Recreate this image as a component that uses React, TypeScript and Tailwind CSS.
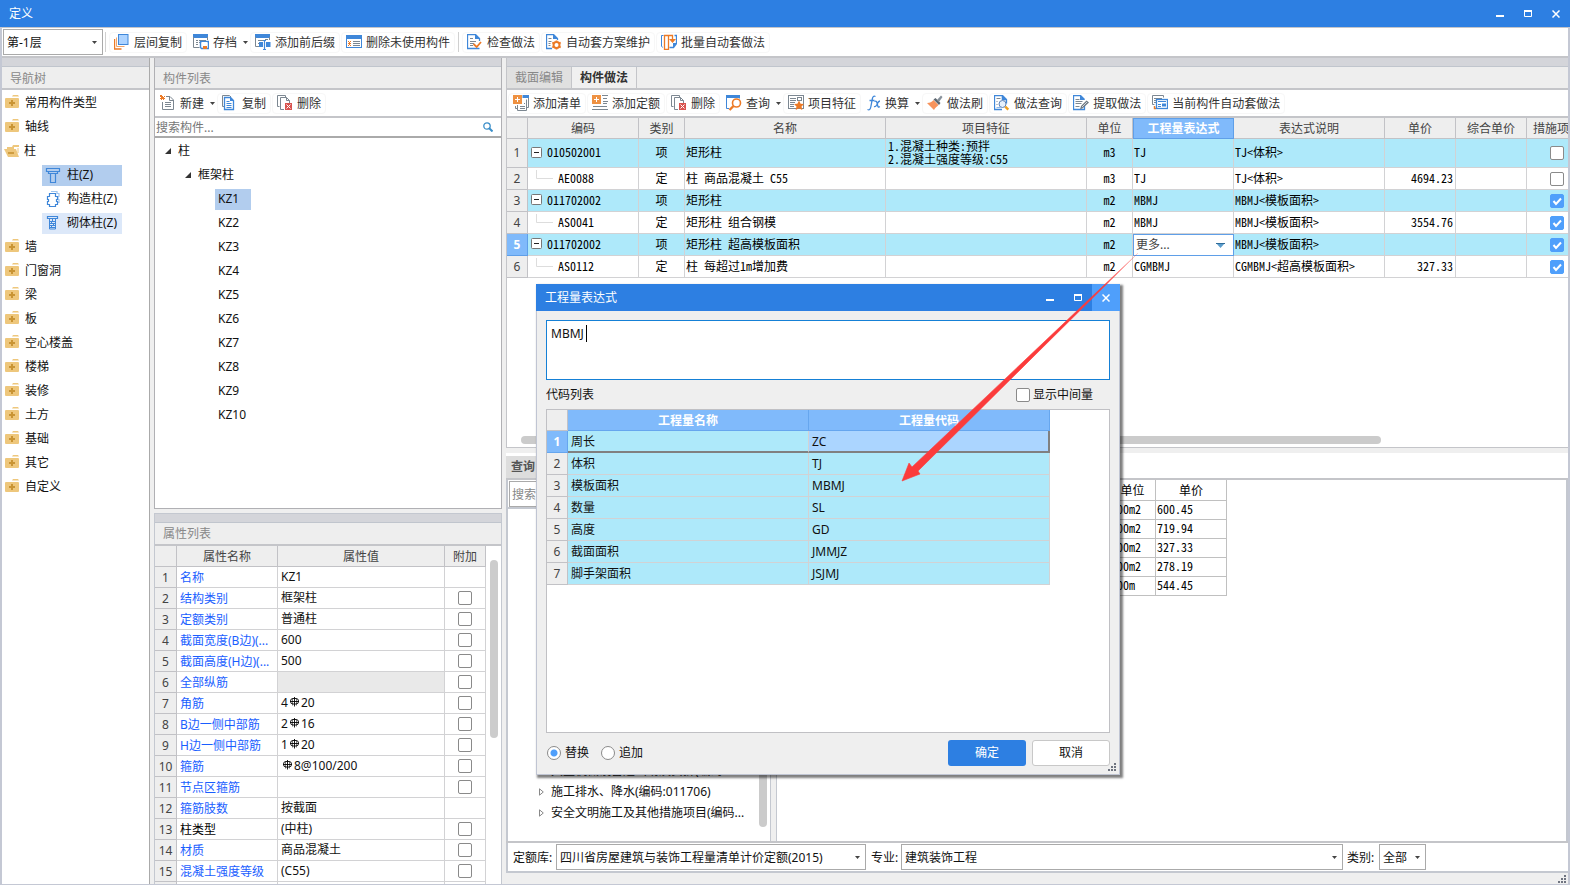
import type { ReactNode } from 'react';
import { clsx } from 'clsx';

const BLUE = '#3f87d9';
const ORANGE = '#ec7a26';
const GRAY = '#7c8791';

function Svg({ children, width = 16 }: { children: ReactNode; width?: number }) {
  return (
    <svg width={width} height={16} viewBox={`0 0 ${width} 16`} fill="none" className="shrink-0" aria-hidden="true">
      {children}
    </svg>
  );
}

const icons = {
  floorCopy: <Svg>
    <path d="M.5 5v10h7" stroke={ORANGE} strokeWidth="1.4" />
    <path d="M2.500 3.500v9h8" stroke="#f0a46c" />
    <rect x="4.500" y=".5" width="9.500" height="10" fill="#add3ff" stroke={BLUE} />
  </Svg>,
  archive: <Svg>
    <rect x="0" y="0" width="15" height="4" fill={BLUE} />
    <path d="M.5 3v10.500h6M14.500 3v3" stroke={GRAY} />
    <path d="M3 6.500h2M6 6.500h7M3 8.500h2M3 10.500h2M6 8.500h1" stroke={GRAY} />
    <path d="M7.500 7.500h8v7h-7l-1-1z" fill="#fff" stroke={BLUE} strokeWidth="1.400" />
    <path d="M9 8h5v3H9z" fill="#fff" />
    <path d="M10 12h4v3h-4z" fill={ORANGE} />
  </Svg>,
  affix: <Svg>
    <rect x="0" y="0" width="15" height="4" fill={BLUE} />
    <path d="M.5 3v9.500h4M14.500 3v3" stroke={GRAY} />
    <path d="M3 6.500h5M3 9.500h3M10 5.500h3" stroke={GRAY} />
    <path d="M8 6.500h3M8 15.500h3M9.500 6v10" stroke={BLUE} strokeWidth="1.200" />
    <path d="M4 8h4v5H4zM11 8h4.500v5H11z" fill={BLUE} />
  </Svg>,
  unused: <Svg>
    <rect x=".5" y="1.500" width="15" height="12" stroke={BLUE} />
    <rect x="0" y="1" width="16" height="4" fill={BLUE} />
    <path d="M2 7h1v1h1V7h1v1h-1v1h1v1h-1v1h1v1h-1v-1h-1v1H2v-1h1v-1H2V9h1V8H2z" fill={ORANGE} />
    <path d="M7 7.500h7M7 9.500h7M7 11.500h7" stroke={GRAY} />
  </Svg>,
  check: <Svg>
    <path d="M12.500 14.500H.5V.5h8l4 4V7" stroke={BLUE} strokeWidth="1.300" />
    <path d="M8 0v5h5z" fill={BLUE} />
    <path d="M3 4.500h3M3 7.500h6M3 9.500h4M3 11.500h3" stroke={GRAY} />
    <path d="M6.500 10l3.200 3 4.300-5" stroke={ORANGE} strokeWidth="1.800" />
  </Svg>,
  gearDoc: <Svg>
    <path d="M6 14.500H.5V.5h7l4 4V6" stroke={BLUE} strokeWidth="1.300" />
    <path d="M7 0v5h5z" fill={BLUE} />
    <path d="M2.500 4.500h3M2.500 7.500h3M2.500 9.500h2M2.500 11.500h2" stroke={GRAY} />
    <circle cx="10.500" cy="11" r="3" stroke={ORANGE} strokeWidth="2" />
    <path d="M10.500 6.500v2M10.500 13.500v2M6.300 8.500l1.800 1M12.900 12.500l1.800 1M6.300 13.500l1.800-1M12.900 9.500l1.800-1" stroke={ORANGE} strokeWidth="1.800" />
  </Svg>,
  batch: <Svg>
    <path d="M2.500 1.500h-2v10.500l1 1.500" stroke={BLUE} />
    <path d="M8.500 13.500h4l3-4v-8h-2" stroke={BLUE} strokeWidth="1.300" />
    <path d="M12 9h4l-4 5z" fill={BLUE} />
    <path d="M3.500 1.500h4v14h-4zM7.500 1.500h4v5" stroke={ORANGE} strokeWidth="1.300" />
    <path d="M8 5h7l-3.500 4z" fill={ORANGE} />
  </Svg>,
  create: <Svg>
    <path d="M6 1.500h4l3.500 3.500v9.500h-11V7" stroke={GRAY} />
    <path d="M9.500 1.500v4h4M5 7.500h6M5 9.500h6M5 11.500h6" stroke={GRAY} />
    <path d="M0 0h2v1h1v1h1V1h1v1H4v1h1v1H4v1H3V4H2v1H1V4H0V3h1V2H0z" fill={ORANGE} />
  </Svg>,
  copy: <Svg>
    <path d="M2 11.500H.5V.5h7l1.500 1.500" stroke={GRAY} />
    <path d="M2.500 2.500h6l3 3v9h-9z" fill="#fff" stroke={BLUE} strokeWidth="1.300" />
    <path d="M8 2v4h4z" fill={BLUE} />
    <path d="M4.500 6.500h3M4.500 8.500h5M4.500 10.500h5M4.500 12.500h5" stroke={BLUE} />
  </Svg>,
  remove: <Svg>
    <path d="M2.500 11.500H.5V.5h8v2" stroke={GRAY} />
    <path d="M7 14.500H3.500v-12h6l3 3V8" stroke={GRAY} />
    <path d="M9.500 2.500v3h3" stroke={GRAY} />
    <rect x="8" y="8" width="7" height="7" fill="#d9534f" />
    <path d="M9.500 9.500l4 4M13.500 9.500l-4 4" stroke="#fff" />
  </Svg>,
  addList: <Svg>
    <path d="M10 2.500h5.500v10h-2M4.500 10v5.500h9v-11" stroke={GRAY} />
    <rect x="9.500" y="0" width="6.500" height="3" fill={BLUE} />
    <path d="M2.500 11v2.500h2M7 11.500h5M7 13.500h5M11 8.500h1" stroke={GRAY} />
    <rect x="0" y="0" width="9" height="9" fill="#ee9142" />
    <path d="M4.500 2v5M2 4.500h5" stroke="#fff" />
  </Svg>,
  addQuota: <Svg>
    <rect x="0" y="0" width="9" height="9" fill="#ee9142" />
    <path d="M4.500 2v5M2 4.500h5" stroke="#fff" />
    <path d="M10 .5h6M11 3.500h4M11 6.500h5M11 8.500h4M1 11.500h14M0 14.500h16" stroke={GRAY} />
  </Svg>,
  query: <Svg>
    <path d="M.5 2v11.500H3M13.500 2v1.500" stroke={BLUE} />
    <rect x="0" y="0" width="14" height="3" fill={BLUE} />
    <circle cx="10.500" cy="8" r="4" fill="#fff" stroke={ORANGE} strokeWidth="1.600" />
    <path d="M7.500 11l-4 4" stroke={ORANGE} strokeWidth="2.400" />
  </Svg>,
  feature: <Svg>
    <rect x=".5" y=".5" width="15" height="13" stroke={GRAY} />
    <path d="M2 3.500h6M2 5.500h6M2 7.500h5M2 9.500h4M2 11.500h4" stroke={GRAY} />
    <rect x="9.500" y="2.500" width="4" height="3" stroke={GRAY} />
    <path d="M11 5.500l1.600 3.200 3.400.3-2.500 2.400.8 3.600-3.300-1.800L7.700 15l.8-3.600L6 9l3.400-.3z" fill={ORANGE} />
  </Svg>,
  fx: <Svg width={14}>
    <path d="M8.500 1.500c-2-1-2.800.5-3.200 2.500L3.800 12c-.5 2.500-1.500 3.300-3.300 2.500M2.500 5.500h5" stroke={BLUE} strokeWidth="1.300" />
    <path d="M7.500 6.500c1.800-1 2.300 0 2.800 2.500s1 4 2.500 2.500M13 6c-2 0-2.500 2.500-3.300 4s-1.500 2-2.700 1.500" stroke={BLUE} strokeWidth="1.300" />
  </Svg>,
  brush: <Svg>
    <path d="M0 8c3 0 5-1 6.500-3l5 5c-1.500 2-3.500 2.500-4.500 5z" fill="#f7935c" />
    <path d="M6.500 4.500l5.500 5.500 1.500-2-5-5z" fill="#5d666f" />
    <path d="M10 5l4-4.500 1.500 1.500L12 7z" fill="#87919b" />
  </Svg>,
  docSearch: <Svg>
    <path d="M8 14.500H.5V.5h8l4 4v4" stroke={BLUE} strokeWidth="1.300" />
    <path d="M8 0v5h5zM2.500 12.500h4" fill={BLUE} stroke={BLUE} strokeWidth=".6" />
    <path d="M2.500 3.500h4M2.500 6.500h1M2.500 9.500h1" stroke={GRAY} />
    <circle cx="8.500" cy="9" r="3.500" fill="#e6f1fd" stroke="#5c82b8" />
    <path d="M11.300 11.700l3 3" stroke="#f0a020" strokeWidth="2.400" />
  </Svg>,
  extract: <Svg>
    <path d="M11.500 10v4.500H.5V.5h7l4 4" stroke={BLUE} strokeWidth="1.300" />
    <path d="M7 0v5h5z" fill={BLUE} />
    <path d="M2.500 4.500h4M2.500 6.500h7M2.500 8.500h6M2.500 11.500h4" stroke={GRAY} />
    <path d="M7 14.500l1-3.500 5.500-5.500 2.500 2-6 5.500z" fill="#6f7a84" />
    <path d="M9 12l5-5" stroke="#fff" strokeWidth=".7" />
  </Svg>,
  autoApply: <Svg>
    <path d="M2.500 9.500H.5v-9h11v2" stroke={GRAY} />
    <path d="M2 3.500h8M2 5.500h2M2 7.500h2" stroke={GRAY} />
    <path d="M2.500 11v2.500H4" stroke={ORANGE} strokeWidth="1.400" />
    <rect x="4.500" y="4.500" width="11" height="9" fill="#fff" stroke={BLUE} strokeWidth="1.300" />
    <path d="M6 6.500h8M6 9.500h3M6 11.500h3" stroke={BLUE} />
    <path d="M10 8.500h4v3h-4z" fill={BLUE} />
  </Svg>,
  columnT: <Svg>
    <path d="M1.500 1.500h13v3h-13zM3.500 4.500v2h9v-2M5.500 6.500v9h5v-9" stroke={BLUE} strokeWidth="1.200" />
  </Svg>,
  columnTie: <Svg>
    <path d="M6 .5h6v2h2v3h-1v3h1v3h-2" stroke="#9fc4ee" strokeWidth="1.200" />
    <path d="M4.500 2.500h6v3h2v3h-1v2h1v3h-2v2h-6v-2h-2v-3h1v-2h-1v-3h2z" fill="#fff" stroke={BLUE} strokeWidth="1.200" />
  </Svg>,
  columnBrick: <Svg>
    <path d="M2.500 1.500h10v2h-10z" stroke={BLUE} strokeWidth="1.200" />
    <path d="M4.500 4v10h6V4M4 6.500h7M4 8.500h7M4 10.500h7M4 12.500h7M7.500 4v2M6.500 6v2M8.500 8v2M6.500 10v2" stroke={BLUE} />
  </Svg>,
};

type IconName = keyof typeof icons;

function Folder({ open }: { open?: boolean }) {
  if (open) {
    return (
      <svg width="16" height="14" viewBox="0 0 16 14" className="-ml-px mb-px mr-1 shrink-0">
        <path d="M3 3h5l1-2h6v2h-5v2H3z" fill="#eec77c" />
        <path d="M14 4v5" stroke="#eec77c" />
        <path d="M0 5h12l3 8H4z" fill="#eec77c" />
        <path d="M4 9h6" stroke="#c48f2e" strokeWidth="1.500" />
      </svg>
    );
  }
  return (
    <svg width="14" height="14" viewBox="0 0 14 14" className="mb-1 mr-[6px] shrink-0">
      <path d="M7 2.500L8 1h5l1 1.500z" fill="#eec77c" />
      <rect y="4" width="14" height="10" rx="1" fill="#eec77c" />
      <path d="M7 6v6M4 9h6" stroke="#c99434" strokeWidth="2" />
    </svg>
  );
}

function Caret({ className }: { className?: string }) {
  return (
    <svg width="5" height="3" viewBox="0 0 5 3" className={clsx('shrink-0 pointer-events-none', className)}>
      <path d="M0 0h5L2.500 3z" fill="#444" />
    </svg>
  );
}

function ToolButton({ icon, label, menu }: { icon: IconName; label: string; menu?: boolean }) {
  return (
    <button type="button" className={clsx('flex h-[21px] shrink-0 items-center gap-1 whitespace-nowrap rounded-sm border pl-1 text-[#333]', menu ? 'border-transparent' : 'border-[#f7f7f7] pr-1')}>
      {icons[icon]}
      <span className="pt-[2px]">{label}</span>
      {menu && <Caret className="ml-[2px]" />}
    </button>
  );
}

function Select({ id, value, className }: { id: string; value: string; className?: string }) {
  return (
    <div className={clsx('relative', className)}>
      <select id={id} aria-label={value} className="h-[26px] w-full appearance-none border border-[#aaa] bg-white pl-[3px] pr-4 pt-[2px] outline-none">
        <option>{value}</option>
      </select>
      <Caret className="absolute right-[6px] top-[12px]" />
    </div>
  );
}

function Check({ checked, label, id }: { checked?: boolean; label: string; id?: string }) {
  return (
    <span className="relative inline-flex align-middle">
      <input id={id} type="checkbox" defaultChecked={checked} aria-label={label} className="peer size-[14px] appearance-none rounded-[2px] border border-[#8a8a8a] bg-white checked:border-[#4f9ffb] checked:bg-[#4f9ffb]" />
      <svg viewBox="0 0 14 14" className="pointer-events-none absolute inset-0 hidden size-[14px] peer-checked:block">
        <path d="M3.500 7l2.500 3 5-5.500" stroke="#fff" strokeWidth="2" fill="none" />
      </svg>
    </span>
  );
}

function WindowButtons({ active }: { active?: boolean }) {
  return (
    <div className="flex h-full">
      <button type="button" aria-label="最小化" className="flex w-7 items-center justify-center">
        <svg width="8" height="8" viewBox="0 0 8 8"><path d="M0 6h8" stroke="#fff" strokeWidth="2" /></svg>
      </button>
      <button type="button" aria-label="最大化" className="flex w-7 items-center justify-center">
        <svg width="8" height="8" viewBox="0 0 8 8"><path d="M.5 1v5.500h7V1M0 1.500h8" stroke="#fff" fill="none" /><path d="M0 1h8" stroke="#fff" strokeWidth="2" /></svg>
      </button>
      <button type="button" aria-label="关闭" className={clsx('flex w-7 items-center justify-center', active && 'bg-[#4f9ffb]')}>
        <svg width="8" height="8" viewBox="0 0 8 8"><path d="M.5 .5l7 7M7.500 .5l-7 7" stroke="#fff" strokeWidth="1.500" /></svg>
      </button>
    </div>
  );
}

function Grip({ className }: { className?: string }) {
  return (
    <svg width="8" height="8" viewBox="0 0 8 8" className={className}>
      <path d="M6 0h2v2H6zM3 3h2v2H3zM6 3h2v2H6zM0 6h2v2H0zM3 6h2v2H3zM6 6h2v2H6z" fill="#6f7480" />
    </svg>
  );
}

function PanelHead({ title, children }: { title?: string; children?: ReactNode }) {
  return (
    <>
      <div className="h-[9px] shrink-0 border-b border-[#c0c5cd] bg-[#d4d5da]" />
      <div className="flex h-[23px] shrink-0 items-center border-b-2 border-[#c4c5c9] bg-[#eeeeee] text-[#888]">
        {title && <h2 className="pl-2 pt-[2px]">{title}</h2>}
        {children}
      </div>
    </>
  );
}

const navBefore = ['常用构件类型', '轴线'];
const navAfter = ['墙', '门窗洞', '梁', '板', '空心楼盖', '楼梯', '装修', '土方', '基础', '其它', '自定义'];
const columnKinds: { icon: IconName; label: string; bg?: string }[] = [
  { icon: 'columnT', label: '柱(Z)', bg: 'bg-[#b2cdee]' },
  { icon: 'columnTie', label: '构造柱(Z)' },
  { icon: 'columnBrick', label: '砌体柱(Z)', bg: 'bg-[#dce8f9]' },
];
const members = ['KZ1', 'KZ2', 'KZ3', 'KZ4', 'KZ5', 'KZ6', 'KZ7', 'KZ8', 'KZ9', 'KZ10'];

function NavPanel() {
  return (
    <section className="flex w-[148px] shrink-0 flex-col border-r border-[#aaa] bg-white">
      <PanelHead title="导航树" />
      <ul className="pt-px">
        {navBefore.map((n) => <li key={n} className="flex h-6 items-center pl-[3px]"><Folder />{n}</li>)}
        <li className="flex h-6 items-center pl-[3px]"><Folder open />柱</li>
        {columnKinds.map((k) => (
          <li key={k.label} className="flex h-6 items-center pl-10">
            <span className={clsx('flex h-[21px] w-20 items-center gap-[6px] pl-[3px]', k.bg)}>{icons[k.icon]}{k.label}</span>
          </li>
        ))}
        {navAfter.map((n) => <li key={n} className="flex h-6 items-center pl-[3px]"><Folder />{n}</li>)}
      </ul>
    </section>
  );
}

const openMark = <svg width="6" height="6" viewBox="0 0 6 6" className="shrink-0"><path d="M6 0v6H0z" fill="#333" /></svg>;

function MemberPanel() {
  return (
    <section className="flex min-h-0 flex-[451] flex-col border border-t-0 border-[#b0b0b4] bg-white">
      <PanelHead title="构件列表" />
      <div className="flex h-7 shrink-0 items-center gap-px border-b-2 border-[#c4c5c9]">
        <ToolButton icon="create" label="新建" menu />
        <ToolButton icon="copy" label="复制" />
        <ToolButton icon="remove" label="删除" />
      </div>
      <div className="flex h-5 shrink-0 items-center border-b-2 border-[#aaa] pr-2">
        <input aria-label="搜索构件" placeholder="搜索构件..." className="min-w-0 flex-1 pl-px pt-[2px] outline-none placeholder:text-[#777]" />
        <svg width="10" height="10" viewBox="0 0 10 10"><circle cx="4" cy="4" r="3.200" fill="none" stroke="#3c8fc9" strokeWidth="1.300" /><path d="M6.500 6.500L9.500 9.500" stroke="#3c8fc9" strokeWidth="2" /></svg>
      </div>
      <ul className="pt-px">
        <li className="flex h-6 items-center gap-[7px] pl-[10px]">{openMark}柱</li>
        <li className="flex h-6 items-center gap-[7px] pl-[30px]">{openMark}框架柱</li>
        {members.map((m, i) => (
          <li key={m} className="flex h-6 items-center pl-[60px]">
            <span className={clsx('flex h-[21px] items-center pl-[3px]', i === 0 && 'w-9 bg-[#b2cdee]')}>{m}</span>
          </li>
        ))}
      </ul>
    </section>
  );
}

const rebar = (
  <svg width="11" height="10" viewBox="0 0 11 10" className="mx-px mb-1 inline-block" fill="none" stroke="#000" strokeWidth=".9">
    <path d="M5.500 0v9.500M1 4.500h9" />
    <rect x="1.500" y="1.500" width="8" height="5.500" rx="2.500" />
    <path d="M3.500 1.500v7M7.500 1.500v7" strokeWidth=".5" />
  </svg>
);

// add: whether the 附加 column has a tick box
const props: { name: string; value?: ReactNode; add?: boolean; plain?: boolean; off?: boolean }[] = [
  { name: '名称', value: 'KZ1' },
  { name: '结构类别', value: '框架柱', add: true },
  { name: '定额类别', value: '普通柱', add: true },
  { name: '截面宽度(B边)(...', value: '600', add: true },
  { name: '截面高度(H边)(...', value: '500', add: true },
  { name: '全部纵筋', add: true, off: true },
  { name: '角筋', value: <>4{rebar}20</>, add: true },
  { name: 'B边一侧中部筋', value: <>2{rebar}16</>, add: true },
  { name: 'H边一侧中部筋', value: <>1{rebar}20</>, add: true },
  { name: '箍筋', value: <>{rebar}8@100/200</>, add: true },
  { name: '节点区箍筋', add: true },
  { name: '箍筋肢数', value: '按截面' },
  { name: '柱类型', value: '(中柱)', add: true, plain: true },
  { name: '材质', value: '商品混凝土', add: true },
  { name: '混凝土强度等级', value: '(C55)', add: true },
  { name: '' },
];

const headCell = 'border-b border-r border-[#c2c2c6] bg-[#eeeeee] p-0 text-center font-normal text-[#444]';
const bodyCell = 'overflow-hidden whitespace-nowrap border-b border-r border-[#d2d2d4] p-0';

function PropertyPanel() {
  return (
    <section className="flex min-h-0 flex-[371] flex-col overflow-hidden border border-b-0 border-[#c4c8d0] bg-white">
      <PanelHead title="属性列表" />
      <div className="relative min-h-0 flex-1 overflow-hidden">
        <table className="w-[331px] table-fixed border-separate border-spacing-0">
          <colgroup><col className="w-[22px]" /><col className="w-[101px]" /><col className="w-[167px]" /><col className="w-[41px]" /></colgroup>
          <thead>
            <tr className="h-[21px]">
              {['', '属性名称', '属性值', '附加'].map((h) => <th key={h} className={clsx(headCell, 'pt-[2px]')}>{h}</th>)}
            </tr>
          </thead>
          <tbody>
            {props.map((p, i) => (
              <tr key={i} className="h-[21px]">
                <td className={clsx(headCell, 'pt-[2px]')}>{p.name && i + 1}</td>
                <td className={clsx(bodyCell, 'pl-[3px] pt-[2px]', p.plain ? 'text-black' : 'text-[#1a5eff]')}>{p.name}</td>
                <td className={clsx(bodyCell, 'pl-[3px]', p.off && 'bg-[#e9e9e9]')}>{p.value}</td>
                <td className={clsx(bodyCell, 'text-center leading-[14px]')}>{p.add && <Check label={`附加 ${p.name}`} />}</td>
              </tr>
            ))}
          </tbody>
        </table>
        <div className="absolute right-[3px] top-[14px] h-[178px] w-2 rounded-full bg-[#cccccc]" />
      </div>
    </section>
  );
}

const song = "font-['Noto_Sans_CJK_SC',sans-serif] [font-feature-settings:'hwid'] text-black";
const songCell = clsx(bodyCell, song, 'pb-[2px]');

const works = [
  { code: '010502001', kind: '项', name: '矩形柱', feature: ['1.混凝土种类:预拌', '2.混凝土强度等级:C55'], unit: 'm3', expr: 'TJ', note: 'TJ<体积>', price: '', on: false },
  { code: 'AE0088', kind: '定', name: '柱 商品混凝土 C55', unit: 'm3', expr: 'TJ', note: 'TJ<体积>', price: '4694.23', on: false },
  { code: '011702002', kind: '项', name: '矩形柱', unit: 'm2', expr: 'MBMJ', note: 'MBMJ<模板面积>', price: '', on: true },
  { code: 'AS0041', kind: '定', name: '矩形柱 组合钢模', unit: 'm2', expr: 'MBMJ', note: 'MBMJ<模板面积>', price: '3554.76', on: true },
  { code: '011702002', kind: '项', name: '矩形柱 超高模板面积', unit: 'm2', expr: '', note: 'MBMJ<模板面积>', price: '', on: true },
  { code: 'AS0112', kind: '定', name: '柱 每超过1m增加费', unit: 'm2', expr: 'CGMBMJ', note: 'CGMBMJ<超高模板面积>', price: '327.33', on: true },
];

function WorkTable() {
  return (
    <table className="w-[1081px] table-fixed border-separate border-spacing-0">
      <colgroup>
        <col className="w-[21px]" /><col className="w-[111px]" /><col className="w-[46px]" /><col className="w-[201px]" /><col className="w-[201px]" /><col className="w-[46px]" />
        <col className="w-[101px]" /><col className="w-[151px]" /><col className="w-[71px]" /><col className="w-[71px]" /><col className="w-[61px]" />
      </colgroup>
      <thead>
        <tr className="h-[21px]">
          {['', '编码', '类别', '名称', '项目特征', '单位', '工程量表达式', '表达式说明', '单价', '综合单价', '措施项目'].map((h) => (
            <th key={h} className={h === '工程量表达式' ? 'border border-[#5f9fe8] bg-[#80bafb] p-0 font-bold text-white' : clsx(headCell, 'pt-[2px]')}>{h}</th>
          ))}
        </tr>
      </thead>
      <tbody>
        {works.map((w, i) => {
          const parent = w.kind === '项';
          return (
            <tr key={i} className={clsx(i === 0 ? 'h-[29px]' : 'h-[22px]', parent && 'bg-[#aee9fa]')}>
              <td className={i === 4 ? 'border-b border-r border-[#5f9fe8] bg-[#80bafb] p-0 text-center font-bold text-white' : headCell}>{i + 1}</td>
              <td className={songCell}>
                {parent ? (
                  <div className="flex items-center gap-[5px] pl-[3px]">
                    <svg width="11" height="11" viewBox="0 0 11 11"><rect x=".5" y=".5" width="10" height="10" rx="1" fill="#fff" stroke="#777" /><path d="M3 5.500h5" stroke="#222" /></svg>
                    {w.code}
                  </div>
                ) : (
                  <div className="flex h-4 items-center gap-[5px] pl-2">
                    <svg width="17" height="16" viewBox="0 0 17 16"><path d="M.5 0v8.500H17" stroke="#ddd" fill="none" /></svg>
                    {w.code}
                  </div>
                )}
              </td>
              <td className={clsx(songCell, 'text-center')}>{w.kind}</td>
              <td className={clsx(songCell, 'pl-px')}>{w.name}</td>
              <td className={clsx(songCell, 'pl-[2px] leading-[13px]')}>{w.feature?.map((f) => <div key={f}>{f}</div>)}</td>
              <td className={clsx(songCell, 'text-center')}>{w.unit}</td>
              {i === 4 ? (
                <td className="border border-[#5f9fe8] bg-white p-0">
                  <button type="button" className="flex w-full items-center justify-between pl-[2px] pr-2 text-[#444]">
                    更多...
                    <svg width="9" height="5" viewBox="0 0 9 5"><path d="M0 0h9L4.500 5z" fill="#5a9ccc" /><path d="M0 .5h9" stroke="#2f6c99" /></svg>
                  </button>
                </td>
              ) : (
                <td className={clsx(songCell, 'pl-px')}>{w.expr}</td>
              )}
              <td className={clsx(songCell, 'pl-px')}>{w.note}</td>
              <td className={clsx(songCell, 'pr-[2px] text-right')}>{w.price}</td>
              <td className={bodyCell} />
              <td className={clsx(bodyCell, 'text-center leading-[14px]')}><Check checked={w.on} label={`措施项目 ${w.code}`} /></td>
            </tr>
          );
        })}
      </tbody>
    </table>
  );
}

function WorkPanel() {
  return (
    <section className="flex min-h-0 flex-[390] flex-col border-b border-l border-[#c4c5c9] bg-white">
      <PanelHead>
        <div role="tablist" className="flex h-full">
          <button type="button" role="tab" className="w-[65px] border-r border-[#c4c5c9] bg-[#e0e0e0]">截面编辑</button>
          <button type="button" role="tab" className="w-[65px] border-r border-[#c4c5c9] bg-[#f0f0f0] font-bold text-[#333]">构件做法</button>
        </div>
      </PanelHead>
      <div className="flex h-7 shrink-0 items-center gap-px border-b-2 border-[#c4c5c9] pl-px">
        <ToolButton icon="addList" label="添加清单" />
        <ToolButton icon="addQuota" label="添加定额" />
        <ToolButton icon="remove" label="删除" />
        <ToolButton icon="query" label="查询" menu />
        <ToolButton icon="feature" label="项目特征" />
        <ToolButton icon="fx" label="换算" menu />
        <ToolButton icon="brush" label="做法刷" />
        <ToolButton icon="docSearch" label="做法查询" />
        <ToolButton icon="extract" label="提取做法" />
        <ToolButton icon="autoApply" label="当前构件自动套做法" />
      </div>
      <div className="min-h-0 flex-1 overflow-hidden"><WorkTable /></div>
      <div className="mb-[3px] ml-[14px] mr-[187px] h-2 shrink-0 rounded-full bg-[#cbcbcb]" />
    </section>
  );
}

const chapters = ['大型机械设备进出场及安拆(编码...', '施工排水、降水(编码:011706)', '安全文明施工及其他措施项目(编码...'];
const quotas = [['100m2', '600.45'], ['100m2', '719.94'], ['100m2', '327.33'], ['100m2', '278.19'], ['100m', '544.45']];
const quotaCell = 'border-b border-r border-[#c0c0c0] p-0';

function QueryPanel() {
  return (
    <section className="flex min-h-0 flex-[420] flex-col border-b-2 border-[#c4c8d0] bg-white">
      <div className="flex h-[27px] shrink-0 items-end border-b-2 border-[#c4c5c9]">
        <button type="button" className="h-[22px] w-16 bg-[#dddddd] pl-[5px] pt-px text-left font-bold text-[#555]">查询</button>
      </div>
      <div className="flex min-h-0 flex-1 border-b-2 border-[#c4c5c9]">
        <div className="relative flex w-[265px] shrink-0 flex-col border-l-2 border-r border-[#c4c8d0]">
          <div className="h-[29px] border-b-2 border-[#c4c8d0] px-px pt-px">
            <input aria-label="搜索" placeholder="搜索" className="h-[26px] w-full border border-[#aaa] pl-[2px] pt-[2px] outline-none placeholder:text-[#888]" />
          </div>
          <ul className="flex flex-1 flex-col justify-end pb-[18px]">
            {chapters.map((c) => (
              <li key={c} className="flex h-[21px] items-center gap-[7px] whitespace-nowrap pl-[31px]">
                <svg width="5" height="8" viewBox="0 0 5 8" className="shrink-0"><path d="M.5 .8v6.400L4.300 4z" fill="#fff" stroke="#888" /></svg>
                {c}
              </li>
            ))}
          </ul>
          <div className="absolute bottom-[14px] right-[3px] h-[200px] w-2 rounded-full bg-[#cbcbcb]" />
        </div>
        <div className="w-[5px] shrink-0 bg-[#efefef]" />
        <div className="min-w-0 flex-1 overflow-hidden border-l border-r-2 border-[#c4c8d0]">
          <table className="w-[450px] table-fixed border-separate border-spacing-0 text-black">
            <colgroup><col className="w-[333px]" /><col className="w-[46px]" /><col className="w-[71px]" /></colgroup>
            <thead>
              <tr className="h-[21px]">
                <th className={quotaCell} />
                <th className={clsx(quotaCell, song, 'font-normal')}>单位</th>
                <th className={clsx(quotaCell, song, 'font-normal')}>单价</th>
              </tr>
            </thead>
            <tbody>
              {quotas.map((q, i) => (
                <tr key={i} className="h-[19px]">
                  <td className={quotaCell} />
                  {q.map((v) => <td key={v} className={clsx(quotaCell, song, 'pb-[2px] pl-px')}>{v}</td>)}
                </tr>
              ))}
            </tbody>
          </table>
        </div>
      </div>
      <div className="flex h-7 shrink-0 items-center border-l-2 border-[#c4c8d0] pl-[5px]">
        <label htmlFor="lib" className="w-[43px] shrink-0 pt-[2px]">定额库:</label>
        <Select id="lib" value="四川省房屋建筑与装饰工程量清单计价定额(2015)" className="w-[310px] shrink-0" />
        <label htmlFor="major" className="ml-[5px] w-[30px] shrink-0 pt-[2px]">专业:</label>
        <Select id="major" value="建筑装饰工程" className="min-w-0 flex-1" />
        <label htmlFor="kind" className="ml-1 w-[32px] shrink-0 pt-[2px]">类别:</label>
        <Select id="kind" value="全部" className="mr-[142px] w-[47px] shrink-0" />
      </div>
    </section>
  );
}

const codes = [['周长', 'ZC'], ['体积', 'TJ'], ['模板面积', 'MBMJ'], ['数量', 'SL'], ['高度', 'GD'], ['截面面积', 'JMMJZ'], ['脚手架面积', 'JSJMJ']];
const blueHead = 'border-b border-r border-[#66a6ee] bg-[#80bafb] p-0 text-center font-bold text-white';
const radio = "size-[14px] appearance-none rounded-full border border-[#8a8a8a] bg-white checked:bg-[radial-gradient(circle,#4f9ffb_3px,white_4px)]";

function ExpressionDialog() {
  return (
    <div role="dialog" aria-label="工程量表达式" className="absolute left-[536px] top-[284px] flex h-[491px] w-[584px] flex-col bg-[#efefef] shadow-[2px_2px_2px_1px_rgba(0,0,0,0.5)]">
      <div className="flex h-[27px] shrink-0 items-center justify-between bg-[#2d7fe2] pl-[9px] text-white">
        工程量表达式
        <WindowButtons active />
      </div>
      <div className="flex min-h-0 flex-1 flex-col border border-t-0 border-[#c0c5d3] px-[9px] pb-2 pt-[9px]">
        <div className="relative shrink-0">
          <textarea aria-label="表达式" defaultValue="MBMJ" className="block h-[60px] w-full resize-none border border-[#1580d6] bg-white px-1 py-[5px] leading-4 outline-none" />
          <span className="absolute left-[40px] top-[5px] h-[17px] w-px bg-black" />
        </div>
        <div className="flex h-[29px] shrink-0 items-center justify-between pr-[17px]">
          <span>代码列表</span>
          <label className="flex items-center gap-[3px]"><Check label="显示中间量" />显示中间量</label>
        </div>
        <div className="min-h-0 flex-1 border border-[#c0c0c4] bg-white">
          <table className="w-[503px] table-fixed border-separate border-spacing-0">
            <colgroup><col className="w-[21px]" /><col className="w-[241px]" /><col className="w-[241px]" /></colgroup>
            <thead>
              <tr className="h-[21px]"><th className={headCell} /><th className={clsx(blueHead, 'pt-[2px]')}>工程量名称</th><th className={clsx(blueHead, 'pt-[2px]')}>工程量代码</th></tr>
            </thead>
            <tbody>
              {codes.map(([name, code], i) => (
                <tr key={code} className="h-[22px] bg-[#aee9fa]">
                  <td className={i === 0 ? blueHead : headCell}>{i + 1}</td>
                  <td className={clsx('border-r border-[#d2d2d4] p-0 pl-[3px]', i === 0 ? 'border-b-2 border-b-[#808080] pt-[2px]' : 'border-b')}>{name}</td>
                  <td className={clsx('p-0 pl-[3px]', i === 0 ? 'border-b-2 border-r-2 border-[#808080] bg-[#abd5ff] pt-[2px]' : 'border-b border-r border-[#d2d2d4]')}>{code}</td>
                </tr>
              ))}
            </tbody>
          </table>
        </div>
        <div className="mt-[7px] flex h-[26px] shrink-0 items-center gap-[6px] pl-px">
          <label className="flex items-center gap-1"><input type="radio" name="mode" defaultChecked className={radio} />替换</label>
          <label className="ml-[6px] flex items-center gap-1"><input type="radio" name="mode" className={radio} />追加</label>
          <button type="button" className="ml-auto h-[26px] w-[78px] rounded-[3px] bg-[#2d7fe2] text-white">确定</button>
          <button type="button" className="h-[26px] w-[78px] rounded-[3px] border border-[#c8c8c8] bg-white">取消</button>
        </div>
      </div>
      <Grip className="absolute bottom-1 right-1" />
    </div>
  );
}

function App() {
  return (
    <div className="relative flex h-screen flex-col overflow-hidden bg-[#efefef] font-['Noto_Sans','Noto_Sans_CJK_SC',sans-serif] text-xs text-[#111]">
      <header className="flex h-[27px] shrink-0 items-center justify-between bg-[#2d7fe2] pl-[9px] text-white">
        定义
        <WindowButtons />
      </header>

      <div className="flex min-h-0 flex-1 flex-col border-x-2 border-b border-[#c4c8d4]">
        <div className="flex h-[31px] shrink-0 items-center gap-px border-b-2 border-t border-[#c4c5c9] bg-white pl-px">
          <Select id="floor" value="第-1层" className="w-[100px]" />
          <div className="ml-px mr-[2px] h-5 w-px bg-[#d0d0d0]" />
          <ToolButton icon="floorCopy" label="层间复制" />
          <ToolButton icon="archive" label="存档" menu />
          <ToolButton icon="affix" label="添加前后缀" />
          <ToolButton icon="unused" label="删除未使用构件" />
          <div className="mx-[2px] h-5 w-px bg-[#d0d0d0]" />
          <ToolButton icon="check" label="检查做法" />
          <ToolButton icon="gearDoc" label="自动套方案维护" />
          <ToolButton icon="batch" label="批量自动套做法" />
        </div>

        <main className="flex min-h-0 flex-1 gap-1">
          <NavPanel />
          <div className="flex w-[348px] shrink-0 flex-col gap-1">
            <MemberPanel />
            <PropertyPanel />
          </div>
          <div className="flex min-w-0 flex-1 flex-col">
            <WorkPanel />
            <div className="h-[5px] shrink-0" />
            <QueryPanel />
            <div className="flex h-[11px] shrink-0 items-center justify-end pr-[2px]"><Grip /></div>
          </div>
        </main>
      </div>

      <ExpressionDialog />

      {/* pointer from the 更多... cell down to the code list */}
      <svg width="240" height="232" viewBox="0 0 240 232" className="pointer-events-none absolute left-[900px] top-[252px]">
        <defs>
          <linearGradient id="fade" x1="1" y1="0" x2="0" y2="1">
            <stop offset="0" stopColor="#fb3b3b" stopOpacity="0.2" />
            <stop offset="0.15" stopColor="#fb3b3b" />
          </linearGradient>
        </defs>
        <path d="M2 229L9 211l3 4L238 1 18 219l2 3z" fill="url(#fade)" stroke="url(#fade)" strokeWidth=".6" />
      </svg>
    </div>
  );
}

export default App;
